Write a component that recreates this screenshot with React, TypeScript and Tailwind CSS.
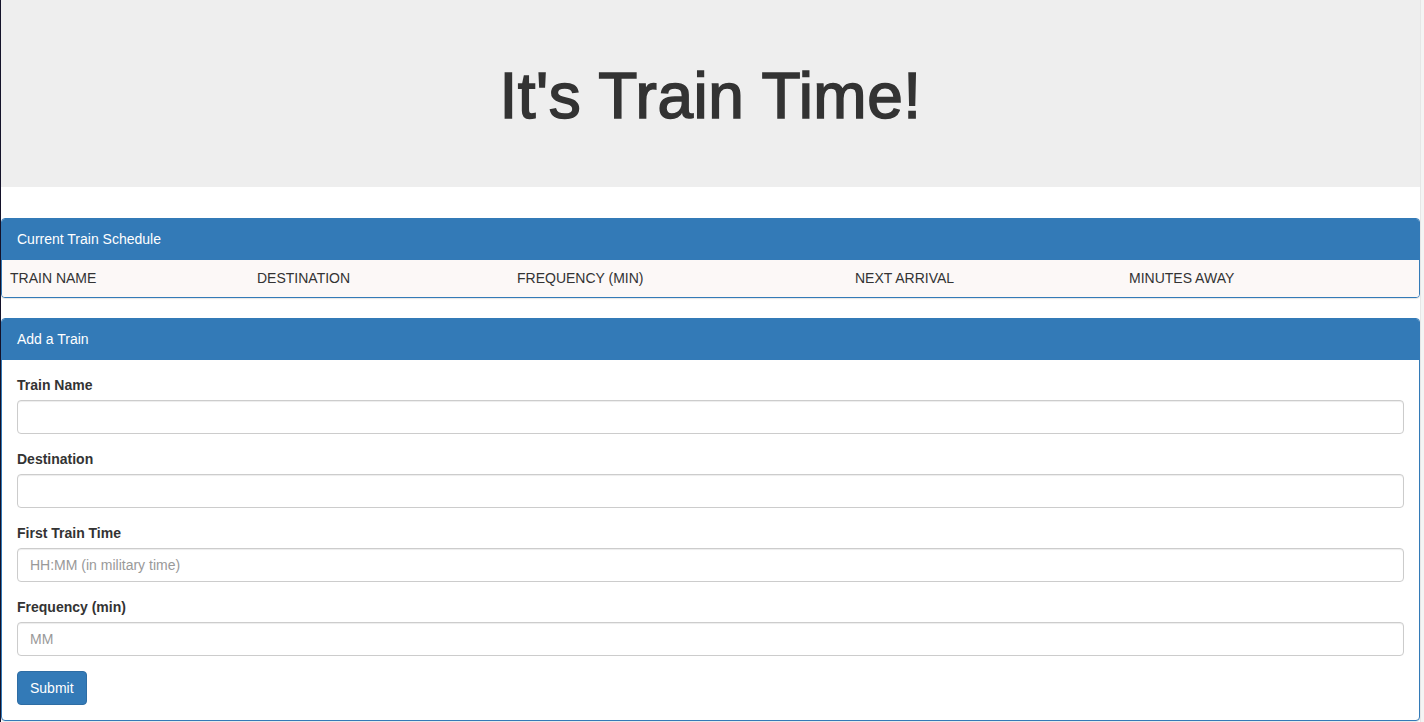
import React from 'react'

const columns = [
  { label: 'TRAIN NAME', w: 'w-[247px]' },
  { label: 'DESTINATION', w: 'w-[260px]' },
  { label: 'FREQUENCY (MIN)', w: 'w-[338px]' },
  { label: 'NEXT ARRIVAL', w: 'w-[274px]' },
  { label: 'MINUTES AWAY', w: 'flex-1' },
]

const fields = [
  { label: 'Train Name', placeholder: '' },
  { label: 'Destination', placeholder: '' },
  { label: 'First Train Time', placeholder: 'HH:MM (in military time)' },
  { label: 'Frequency (min)', placeholder: 'MM' },
]

function Panel(props: any) {
  return (
    <div className={`border border-[#337ab7] rounded-[4px] bg-white shadow-[0_1px_1px_rgba(0,0,0,0.1)] ${props.className ?? ''}`}>
      <div className="bg-[#337ab7] text-white text-[14px] leading-[20px] px-[15px] pt-[10px] pb-[11px] rounded-t-[3px]">
        {props.title}
      </div>
      {props.children}
    </div>
  )
}

export default function App() {
  return (
    <div
      className="flex min-h-[722px] bg-white text-[#333] text-[14px]"
      style={{ fontFamily: '"Liberation Sans", Arial, Helvetica, sans-serif' }}
    >
      <div className="w-px bg-[#14122a] shrink-0" />
      <div className="w-[1419px] shrink-0">
        <div className="bg-[#eeeeee] h-[187px] pt-[62px]">
          <h1 className="text-center text-[64px] leading-[69px] font-normal text-[#333] [-webkit-text-stroke:1.6px_#333] tracking-[0.5px]">
            It's Train Time!
          </h1>
        </div>

        <Panel title="Current Train Schedule" className="mt-[31px]">
          <div className="flex bg-[#fcf8f7] rounded-b-[3px]">
            {columns.map((c) => (
              <div key={c.label} className={`${c.w} px-[8px] pt-[8px] pb-[9px] leading-[20px]`}>
                {c.label}
              </div>
            ))}
          </div>
        </Panel>

        <Panel title="Add a Train" className="mt-[20px]">
          <div className="p-[15px]">
            {fields.map((f) => (
              <div key={f.label} className="mb-[15px]">
                <label className="block font-bold leading-[20px] mb-[5px]">{f.label}</label>
                <input
                  type="text"
                  placeholder={f.placeholder}
                  className="block w-full h-[34px] px-[12px] border border-[#cccccc] rounded-[4px] text-[14px] text-[#555] placeholder:text-[#999] shadow-[inset_0_1px_1px_rgba(0,0,0,0.075)] outline-none"
                />
              </div>
            ))}
            <button className="h-[34px] px-[12px] bg-[#337ab7] border border-[#2e6da4] rounded-[4px] text-white text-[14px] leading-[20px]">
              Submit
            </button>
          </div>
        </Panel>
      </div>
      <div className="flex-1 bg-[#f4f4f4] border-l border-[#e6e6e6]" />
    </div>
  )
}
